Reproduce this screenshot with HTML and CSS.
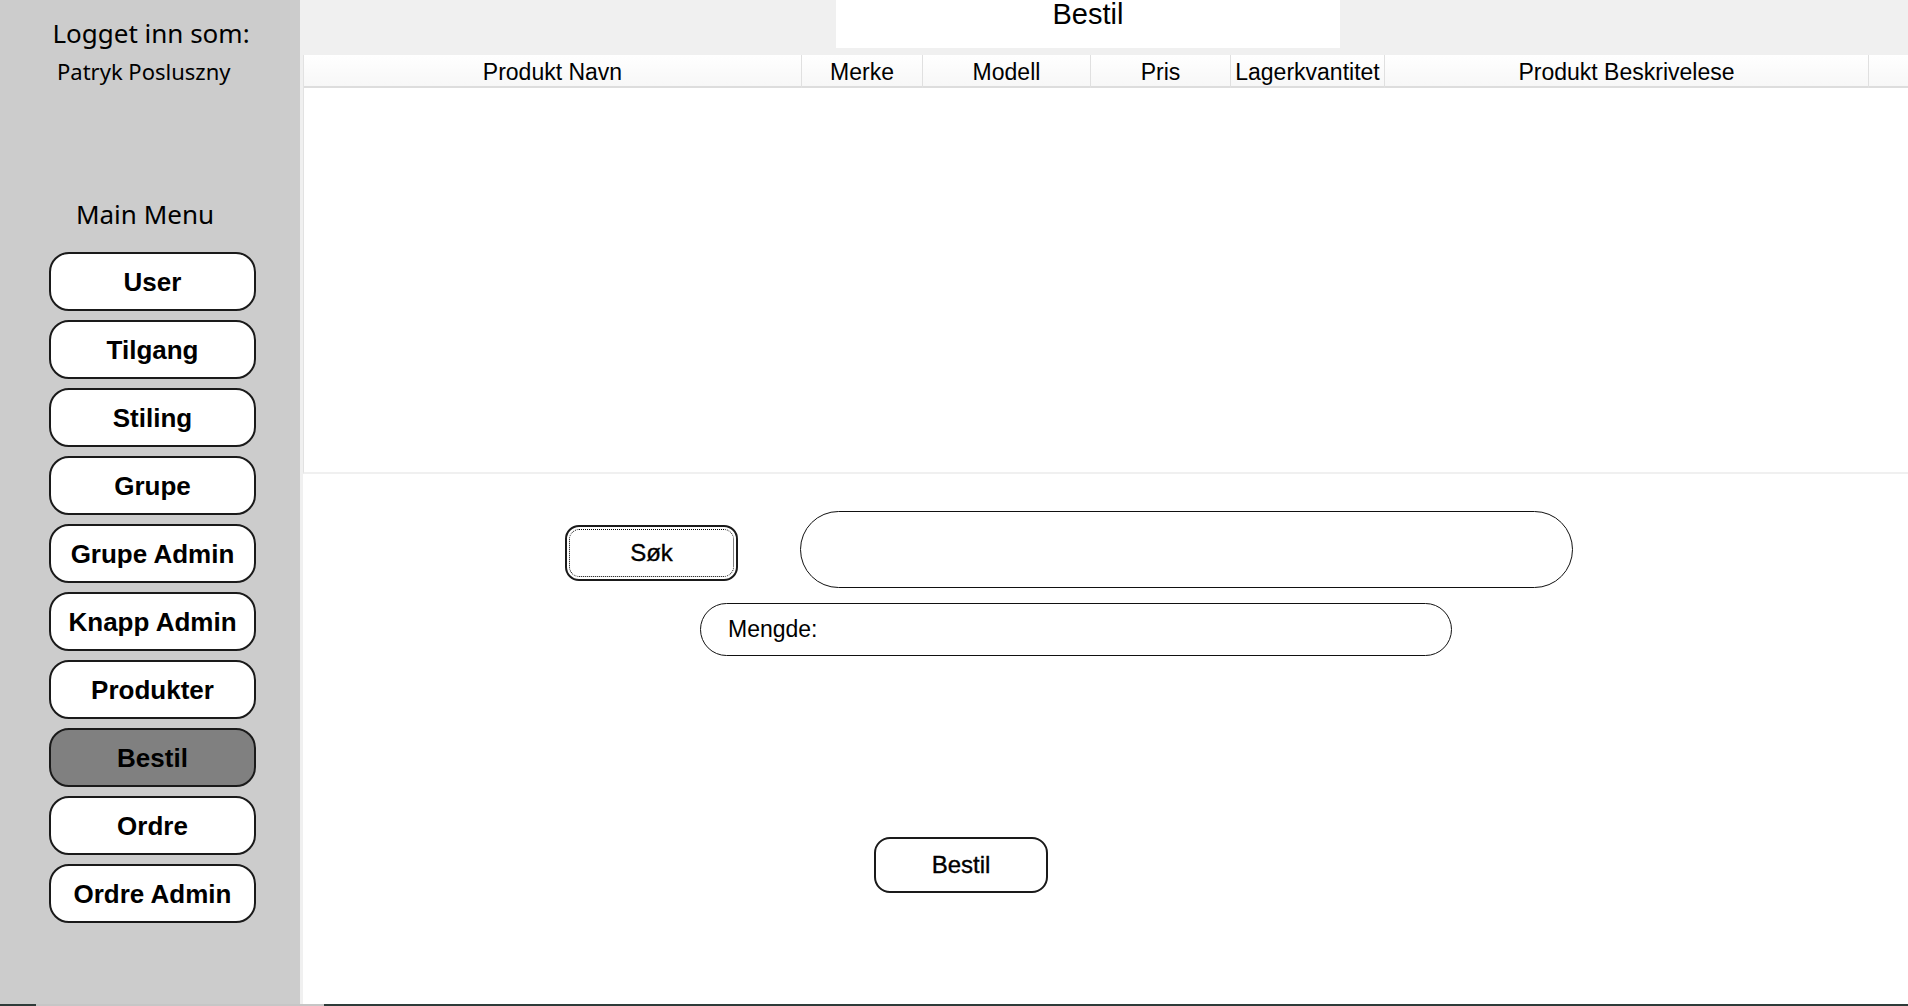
FILE: index.html
```html
<!DOCTYPE html>
<html lang="no">
<head>
<meta charset="utf-8">
<title>Bestil</title>
<link rel="stylesheet" href="styles.css">
</head>
<body>
<div class="app">
  <aside class="sidebar">
    <p class="login-label">Logget inn som:</p>
    <p class="login-name">Patryk Posluszny</p>
    <p class="menu-title">Main Menu</p>
    <nav class="menu">
      <button class="menu-btn">User</button>
      <button class="menu-btn">Tilgang</button>
      <button class="menu-btn">Stiling</button>
      <button class="menu-btn">Grupe</button>
      <button class="menu-btn">Grupe Admin</button>
      <button class="menu-btn">Knapp Admin</button>
      <button class="menu-btn">Produkter</button>
      <button class="menu-btn active">Bestil</button>
      <button class="menu-btn">Ordre</button>
      <button class="menu-btn">Ordre Admin</button>
    </nav>
  </aside>
  <main class="content">
    <div class="topband">
      <div class="title-box">Bestil</div>
    </div>
    <div class="grid">
      <div class="grid-head">
        <div class="hcell">Produkt Navn</div>
        <div class="hcell">Merke</div>
        <div class="hcell">Modell</div>
        <div class="hcell">Pris</div>
        <div class="hcell">Lagerkvantitet</div>
        <div class="hcell">Produkt Beskrivelese</div>
        <div class="hcell last"></div>
      </div>
      <div class="grid-body"></div>
    </div>
    <div class="form">
      <div class="search-row">
        <button class="btn search-btn">Søk</button>
        <input class="search-input" type="text" aria-label="Søk">
      </div>
      <div class="qty">
        <span class="qty-label">Mengde:</span>
        <input class="qty-input" type="text" aria-label="Mengde">
      </div>
      <button class="btn order-btn">Bestil</button>
    </div>
  </main>
</div>
<div class="taskbar">
  <span class="tb-dark tb-a"></span>
  <span class="tb-light"></span>
  <span class="tb-dark tb-b"></span>
</div>
</body>
</html>
```
FILE: styles.css
```css
* { box-sizing: border-box; }
html, body { margin: 0; padding: 0; }
body {
  width: 1908px;
  height: 1006px;
  overflow: hidden;
  display: flex;
  flex-direction: column;
  font-family: "Liberation Sans", Arial, sans-serif;
  color: #000;
  background: #fff;
}
.app {
  display: flex;
  height: 1004px;
}
.sidebar {
  width: 300px;
  flex: none;
  background: #cccccc;
  display: flex;
  flex-direction: column;
}
.login-label {
  margin: 15px 0 0 0;
  width: 302px;
  text-align: center;
  font-family: "Noto Sans", "Open Sans", sans-serif;
  font-size: 26px;
  line-height: 36px;
}
.login-name {
  margin: 5px 0 0 57px;
  font-family: "Noto Sans", "Open Sans", sans-serif;
  font-size: 22px;
  line-height: 30px;
}
.menu-title {
  margin: 110px 0 0 0;
  width: 290px;
  text-align: center;
  font-family: "Noto Sans", "Open Sans", sans-serif;
  font-size: 26px;
  line-height: 36px;
}
.menu {
  display: flex;
  flex-direction: column;
  gap: 9px;
  margin: 20px 0 0 49px;
}
.menu-btn {
  width: 207px;
  height: 59px;
  border: 2px solid #1a1a1a;
  border-radius: 20px;
  background: #fff;
  font-family: "Liberation Sans", Arial, sans-serif;
  font-weight: bold;
  font-size: 26px;
  color: #000;
  padding: 0;
  line-height: 1;
}
.menu-btn.active { background: #808080; }

.content {
  flex: 1;
  background: #fff;
  border-left: 3px solid #f0f0f0;
  display: flex;
  flex-direction: column;
  min-width: 0;
}
.topband {
  height: 55px;
  background: #f0f0f0;
  flex: none;
}
.title-box {
  margin-left: 533px;
  width: 504px;
  height: 48px;
  background: #fff;
  text-align: center;
  font-size: 29px;
  line-height: 28px;
}
.grid {
  border-left: 1px solid #e2e2e2;
  border-bottom: 2px solid #f0f0f0;
  height: 419px;
  display: flex;
  flex-direction: column;
}
.grid-head {
  display: grid;
  grid-template-columns: 498px 121px 168px 140px 154px 484px 1fr;
  height: 33px;
  background: linear-gradient(#ffffff, #f7f7f7);
  border-bottom: 2px solid #dddddd;
}
.hcell {
  border-right: 1px solid #e0e0e0;
  text-align: center;
  font-size: 23px;
  line-height: 31px;
  padding-top: 2px;
  white-space: nowrap;
}
.hcell.last { border-right: none; }
.grid-body { flex: 1; background: #fff; }

.form {
  display: flex;
  flex-direction: column;
  align-items: flex-start;
}
.search-row {
  display: flex;
  align-items: flex-start;
  margin: 37px 0 0 262px;
}
.btn {
  background: #fff;
  border: 2px solid #1a1a1a;
  font-family: "Liberation Sans", Arial, sans-serif;
  font-size: 24px;
  color: #000;
  padding: 0;
  -webkit-text-stroke: 0.35px #000;
}
.search-btn {
  width: 173px;
  height: 56px;
  border-radius: 14px;
  margin-top: 14px;
  outline: 1.5px dotted #000;
  outline-offset: -5px;
}
.search-input {
  margin-left: 62px;
  width: 773px;
  height: 77px;
  border: 1.5px solid #111;
  border-radius: 39px;
  background: #fff;
  padding: 0 30px;
  font-size: 24px;
  font-family: "Liberation Sans", Arial, sans-serif;
  outline: none;
}
.qty {
  margin: 15px 0 0 397px;
  width: 752px;
  height: 53px;
  border: 1.5px solid #111;
  border-radius: 27px;
  display: flex;
  align-items: center;
  padding-left: 27px;
}
.qty-label {
  font-size: 23px;
  white-space: nowrap;
}
.qty-input {
  flex: 1;
  border: none;
  outline: none;
  height: 100%;
  background: transparent;
  font-size: 23px;
  font-family: "Liberation Sans", Arial, sans-serif;
  margin-right: 26px;
}
.order-btn {
  margin: 181px 0 0 571px;
  width: 174px;
  height: 56px;
  border-radius: 16px;
}

.taskbar {
  height: 2px;
  display: flex;
  flex: none;
}
.tb-dark { background: #2e3b39; }
.tb-a { width: 36px; }
.tb-light { width: 288px; background: #c6c6c6; }
.tb-b { flex: 1; }
```
